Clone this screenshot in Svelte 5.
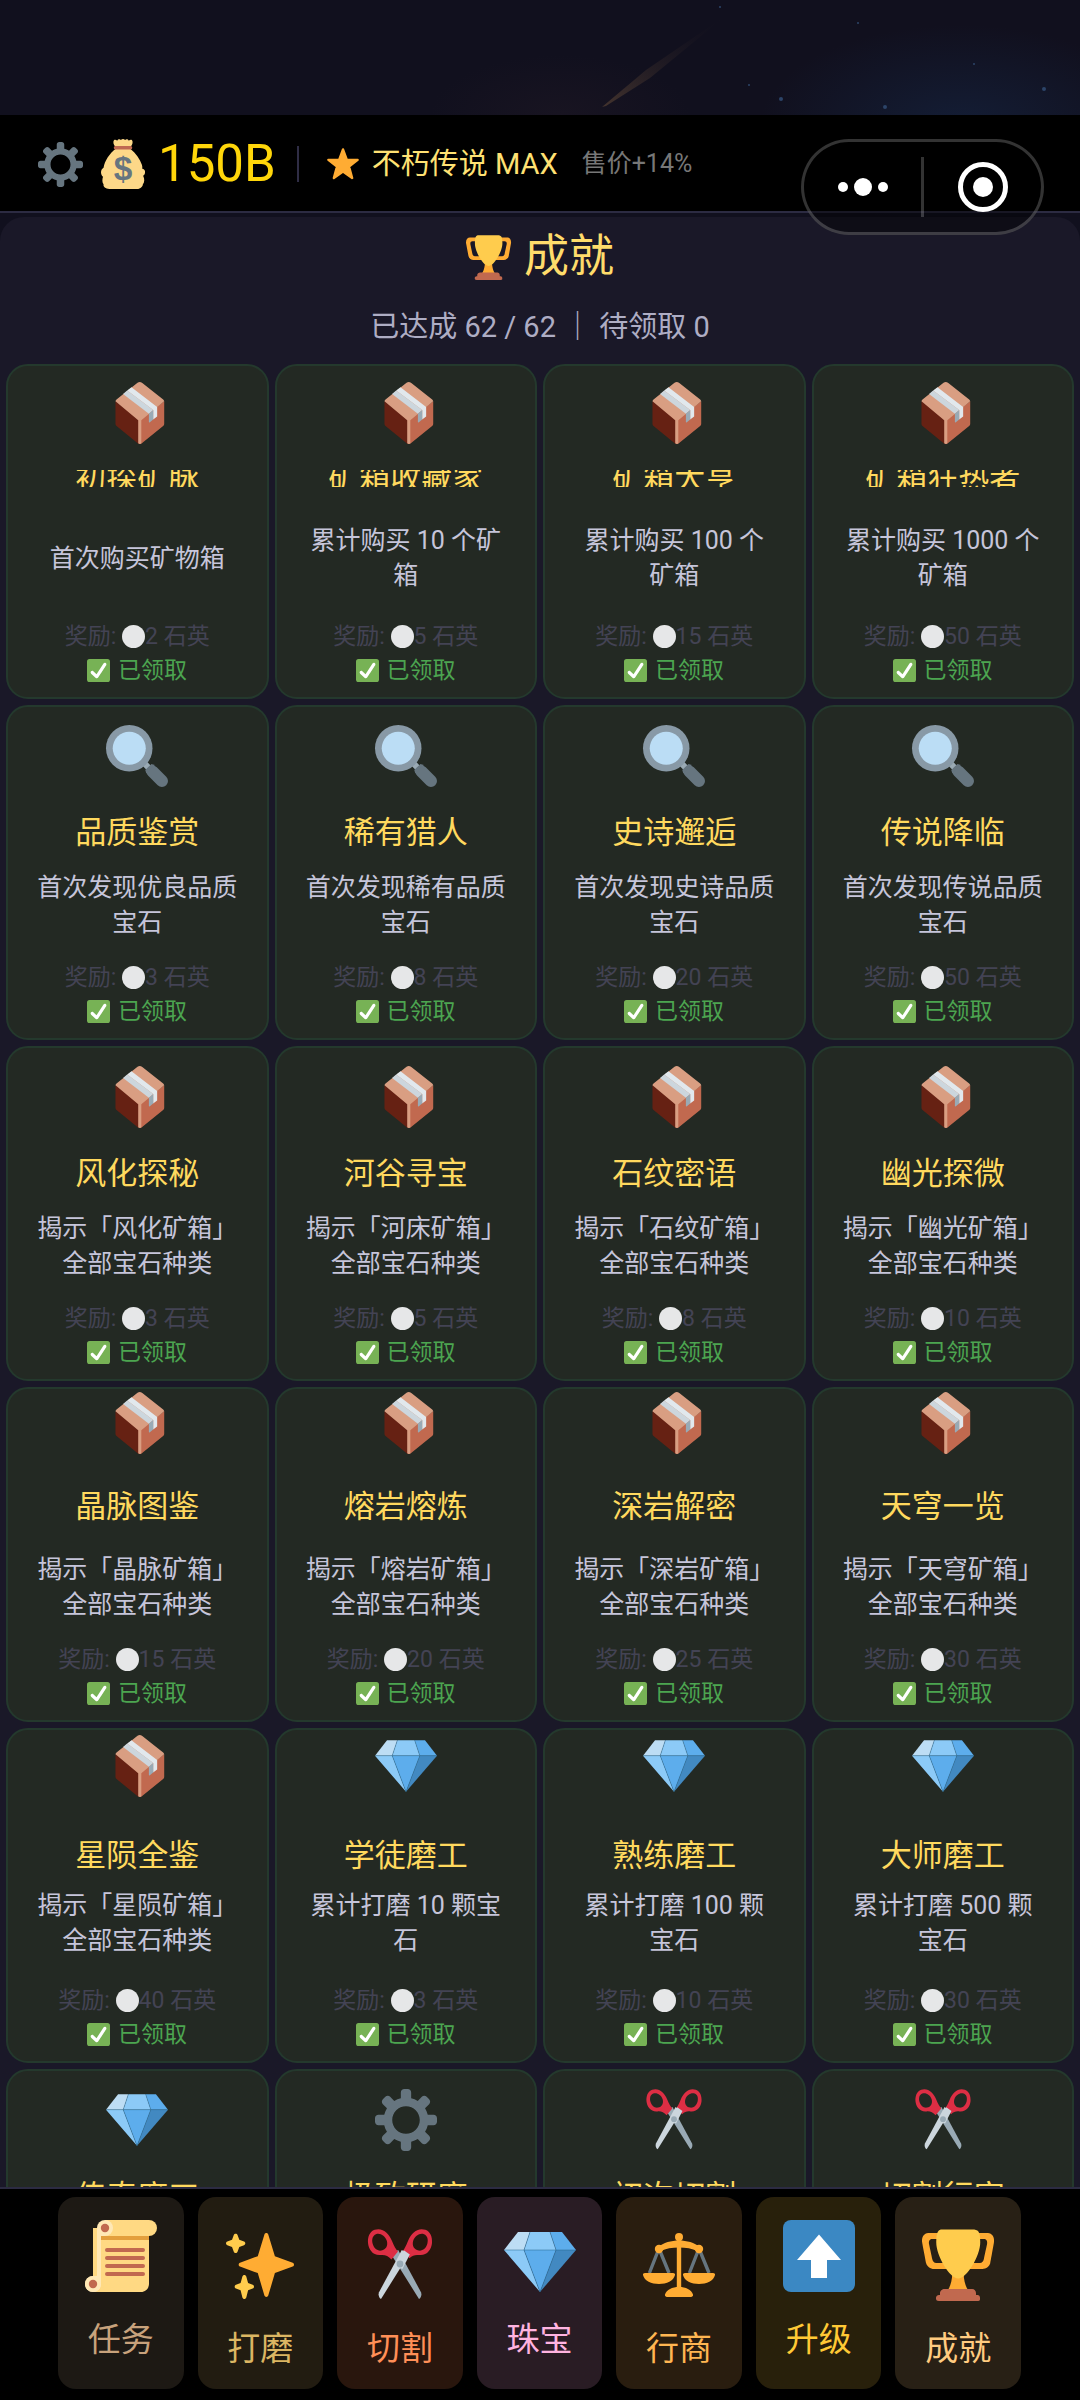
<script lang="ts">
	type Achievement = { icon: string; name: string; desc?: string; reward?: number };

	const rows: { layout: string; items: Achievement[] }[] = [
		{
			layout: 'clip',
			items: [
				{ icon: 'box', name: '初探矿脉', desc: '首次购买矿物箱', reward: 2 },
				{ icon: 'box', name: '矿箱收藏家', desc: '累计购买 10 个矿\n箱', reward: 5 },
				{ icon: 'box', name: '矿箱大亨', desc: '累计购买 100 个\n矿箱', reward: 15 },
				{ icon: 'box', name: '矿箱狂热者', desc: '累计购买 1000 个\n矿箱', reward: 50 }
			]
		},
		{
			layout: '',
			items: [
				{ icon: 'lens', name: '品质鉴赏', desc: '首次发现优良品质\n宝石', reward: 3 },
				{ icon: 'lens', name: '稀有猎人', desc: '首次发现稀有品质\n宝石', reward: 8 },
				{ icon: 'lens', name: '史诗邂逅', desc: '首次发现史诗品质\n宝石', reward: 20 },
				{ icon: 'lens', name: '传说降临', desc: '首次发现传说品质\n宝石', reward: 50 }
			]
		},
		{
			layout: '',
			items: [
				{ icon: 'box', name: '风化探秘', desc: '揭示「风化矿箱」\n全部宝石种类', reward: 3 },
				{ icon: 'box', name: '河谷寻宝', desc: '揭示「河床矿箱」\n全部宝石种类', reward: 5 },
				{ icon: 'box', name: '石纹密语', desc: '揭示「石纹矿箱」\n全部宝石种类', reward: 8 },
				{ icon: 'box', name: '幽光探微', desc: '揭示「幽光矿箱」\n全部宝石种类', reward: 10 }
			]
		},
		{
			layout: 'high',
			items: [
				{ icon: 'box', name: '晶脉图鉴', desc: '揭示「晶脉矿箱」\n全部宝石种类', reward: 15 },
				{ icon: 'box', name: '熔岩熔炼', desc: '揭示「熔岩矿箱」\n全部宝石种类', reward: 20 },
				{ icon: 'box', name: '深岩解密', desc: '揭示「深岩矿箱」\n全部宝石种类', reward: 25 },
				{ icon: 'box', name: '天穹一览', desc: '揭示「天穹矿箱」\n全部宝石种类', reward: 30 }
			]
		},
		{
			layout: 'tight',
			items: [
				{ icon: 'box', name: '星陨全鉴', desc: '揭示「星陨矿箱」\n全部宝石种类', reward: 40 },
				{ icon: 'gem', name: '学徒磨工', desc: '累计打磨 10 颗宝\n石', reward: 3 },
				{ icon: 'gem', name: '熟练磨工', desc: '累计打磨 100 颗\n宝石', reward: 10 },
				{ icon: 'gem', name: '大师磨工', desc: '累计打磨 500 颗\n宝石', reward: 30 }
			]
		},
		{
			layout: '',
			items: [
				{ icon: 'gem', name: '传奇磨工' },
				{ icon: 'gear', name: '极致研磨' },
				{ icon: 'scissors', name: '初次切割' },
				{ icon: 'scissors', name: '切割行家' }
			]
		}
	];

	const tabs = [
		{ id: 'task', icon: 'scroll', label: '任务', layout: '' },
		{ id: 'polish', icon: 'sparkles', label: '打磨', layout: 'low' },
		{ id: 'cut', icon: 'scissors', label: '切割', layout: 'low' },
		{ id: 'jewel', icon: 'gem', label: '珠宝', layout: 'drop' },
		{ id: 'trade', icon: 'scales', label: '行商', layout: 'low' },
		{ id: 'upgrade', icon: 'up', label: '升级', layout: '' },
		{ id: 'achieve', icon: 'trophy', label: '成就', layout: 'low' }
	];

	const total = 62;
	const done = 62;
	const pending = 0;

	let active = $state('achieve');
</script>

{#snippet icon(name: string)}
	<svg class="icon" viewBox="0 0 36 36" aria-hidden="true">
		{#if name === 'box'}
			<path fill="#662113" d="M5.5 11.2 19.6 22v14c-.4 0-.8-.2-1.200-.5L6.300 25.700c-.5-.4-.8-.9-.8-1.500z" />
			<path fill="#C1694F" d="M33.800 11.200 19.600 22v14c.4 0 .8-.2 1.200-.5l12.200-9.800c.5-.4.8-.9.8-1.500z" />
			<path fill="#D99E82" d="M5.500 11.200c0-.4.200-.8.600-1.100L18.300.5c.8-.6 1.800-.6 2.600 0l12.300 9.600c.4.300.6.700.6 1.100L20.500 22.200v13.400c-.6.500-1.200.5-1.800 0V22.200z" />
			<path fill="#E1E8ED" d="M14.800 3.100 29.700 14.500v5.600l-2.300 1.700v-5.500L12.300 5z" />
			<path fill="#CCD6DD" d="M12.300 5 27.400 16.300l-2.500 2.100L9.900 6.900z" />
			<path fill="#99AAB5" d="m27.400 16.300-2.500 2.100v4.700c0 .4.300.5.600.3l1.900-1.600z" />
		{:else if name === 'lens'}
			<path stroke="#9AAAB4" stroke-width="3.500" d="m22 22 4 4" />
			<path stroke="#66757F" stroke-width="7" stroke-linecap="round" d="m27 27 5.500 5.500" />
			<path fill="#66757F" d="m22.800 26.200 3.600-3.600 2 .6-5 5z" />
			<circle cx="13.500" cy="13.500" r="13.500" fill="#8899A6" />
			<circle cx="13.500" cy="13.500" r="9.600" fill="#BBDDF5" />
		{:else if name === 'gem'}
			<path fill="#BDDDF4" d="M13 3H7l-7 9h10z" />
			<path fill="#5DADEC" d="m36 12-7-9h-6l3 9z" />
			<path fill="#4289C1" d="M26 12h10L18 33z" />
			<path fill="#8CCAF7" d="M10 12H0l18 21zm3-9-3 9h16l-3-9z" />
			<path fill="#5DADEC" d="m18 33-8-21h16z" />
			<path fill="none" stroke="#27668f" stroke-width=".250" d="M13 3l-3 9 8 21 8-21-3-9M0 12h36" />
		{:else if name === 'gear'}
			<path fill="#66757F" d="M34 15h-3.362c-.324-1.369-.864-2.651-1.582-3.814l2.379-2.379c.781-.781.781-2.048 0-2.829l-1.414-1.414c-.781-.781-2.047-.781-2.828 0l-2.379 2.379C23.650 6.225 22.369 5.686 21 5.362V2c0-1.104-.896-2-2-2h-2c-1.104 0-2 .896-2 2v3.362c-1.369.324-2.651.864-3.814 1.582L8.808 4.565c-.781-.781-2.048-.781-2.828 0L4.565 5.979c-.781.781-.781 2.048-.001 2.829l2.379 2.379C6.225 12.350 5.686 13.632 5.362 15H2c-1.104 0-2 .896-2 2v2c0 1.104.896 2 2 2h3.362c.324 1.368.864 2.650 1.582 3.813l-2.379 2.379c-.78.78-.78 2.048.001 2.829l1.414 1.414c.78.78 2.047.78 2.828 0l2.379-2.379c1.163.719 2.445 1.258 3.814 1.582V34c0 1.104.896 2 2 2h2c1.104 0 2-.896 2-2v-3.362c1.368-.324 2.650-.864 3.813-1.582l2.379 2.379c.781.781 2.047.781 2.828 0l1.414-1.414c.781-.781.781-2.048 0-2.829l-2.379-2.379c.719-1.163 1.258-2.445 1.582-3.814H34c1.104 0 2-.896 2-2v-2C36 15.896 35.104 15 34 15zM18 26c-4.418 0-8-3.582-8-8s3.582-8 8-8 8 3.582 8 8-3.582 8-8 8z" />
		{:else if name === 'scissors'}
			<path fill="#99AAB5" d="m13.600 12.800 3.500-2.300L28.500 31.600c.4.900.2 2.800-1 3.400z" />
			<path fill="#CCD6DD" d="m22.400 12.800-3.500-2.300L7.500 31.600c-.4.900-.2 2.800 1 3.400z" />
			<path fill="#DD2E44" fill-rule="evenodd" d="M5.300.4C9.200-.9 12.500 2 14 6c1 2.600 2 4.300 3 5.300l-3.300 4c-1.600-2-3.300-2.500-5.300-2.300C4.500 13.400 2.300 10.300 2 7 1.800 4 2.800 1.300 5.300.4zM6 2.600c-1.700.6-2.200 2.600-1.700 4.700.6 2.400 2.400 3.800 4.400 3.500 2.300-.4 3.400-2.500 2.700-4.900C10.600 3.500 8.200 1.900 6 2.600z" />
			<path fill="#DD2E44" fill-rule="evenodd" d="M30.700.4C26.800-.9 23.500 2 22 6c-1 2.600-2 4.300-2.500 4.800l3.200 3.800c1.600-1.500 2.900-1.800 4.900-1.600 3.900.4 6.100-2.700 6.400-6 .2-3-.8-5.700-3.300-6.600zM30 2.600c1.700.6 2.200 2.600 1.700 4.700-.6 2.400-2.400 3.800-4.400 3.500-2.300-.4-3.400-2.500-2.700-4.900.8-2.400 3.200-4 5.400-3.300z" />
			<path fill="#CCD6DD" d="m19.900 10.600 3 2.200-3.700 7.200-3.600-1.700z" />
			<circle cx="18" cy="17.500" r="1.700" fill="#99AAB5" />
		{:else if name === 'trophy'}
			<path fill="#FFAC33" d="M5.123 5h6C12.227 5 13 4.896 13 6V4c0-1.104-.773-2-1.877-2h-8c-2 0-3.583 2.125-3 5 0 0 1.791 9.375 1.917 9.958C2.373 18.500 4.164 20 6.081 20h6.958c1.105 0-.039-1.896-.039-3v-2c0 1.104-.773 2-1.877 2h-4c-1.104 0-1.833-1.042-2-2S3.539 7.667 3.539 7.667C3.206 5.750 4.018 5 5.123 5zm25.812 0h-6C23.831 5 22 4.896 22 6V4c0-1.104 1.831-2 2.935-2h8c2 0 3.584 2.125 3 5 0 0-1.633 9.419-1.771 10-.354 1.500-2.042 3-4 3h-7.146C21.914 20 22 18.104 22 17v-2c0 1.104 1.831 2 2.935 2h4c1.104 0 1.834-1.042 2-2s1.584-7.333 1.584-7.333C32.851 5.750 32.040 5 30.935 5z" />
			<path fill="#FFAC33" d="M20.832 22c0-6.958-2.709 0-2.709 0s-3-6.958-3 0-3.291 10-3.291 10h12.292s-3.292-3.042-3.292-10z" />
			<path fill="#FFCC4D" d="M29.123 6.577c0 6.775-6.770 18.192-11 18.192-4.231 0-11-11.417-11-18.192 0-5.195 1-6.319 3-6.319 1.374 0 6.025-.027 8-.027h7c2.917 0 4 .684 4 6.346z" />
			<path fill="#C1694F" d="M27 33c0 1.104.227 2-.877 2h-16C9.018 35 9 34.104 9 33v-1c0-1.104 1.164-2 2.206-2h13.917c1.042 0 1.877.896 1.877 2z" />
			<path fill="#C1694F" d="M29 34.625c0 .76.165 1.375-1.252 1.375H8.498C7.206 36 7 35.385 7 34.625v-.25C7 33.615 7.738 33 8.498 33h19.250c.759 0 1.252.615 1.252 1.375z" />
		{:else if name === 'bag'}
			<path fill="#FDD888" d="M12.500 5.500C11 4 10.700 2 11.500.9c.8-.8 1.700-.1 2.300.3C14.500.1 15.700-.2 16.500.8c.9-1 2.100-1 3 0 .8-1 2-.7 2.700.4.6-.4 1.500-1.100 2.300-.3.8 1.100.5 3.100-1 4.600z" />
			<path fill="#FDD888" d="M12.800 7h10.400c4 3.200 7 7.300 8.400 11.600.3 1 .4 1.900.3 2.900 1.600.3 2.300 1.500 1.900 3.200-.2.900-.6 1.400-1.300 1.700 1.200 2.500 1 4.800-.2 6.100.1 1.300-1.500 3.500-4.200 3.500H8.200c-2.800 0-4.600-1.700-4.200-3.400-1.100-1.400-1-3.700-.4-5.500C2 26 1.300 22.300 4 20.700c.7-5 4.500-10.500 8.800-13.700z" />
			<path fill="#BF6952" d="M12.500 5h11c1.500 0 1.500 2.500 0 2.500h-11c-1.500 0-1.500-2.500 0-2.500z" />
			<text x="18" y="29.500" text-anchor="middle" class="coin">$</text>
		{:else if name === 'star'}
			<path fill="#FFAC33" stroke="#FFAC33" stroke-width="2.500" stroke-linejoin="round" d="m18 2.500 4 10.800 11.500.3-9.100 7 3.300 12.200-9.700-6.900-9.700 6.900 3.300-12.200-9.100-7 11.500-.3z" />
		{:else if name === 'scroll'}
			<path fill="#FFD983" d="M32 8v24c0 2.200-1.800 4-4 4H4V4h28z" />
			<path fill="#FFE8B6" d="M6 4h4v4H8v24a4 4 0 1 1-4-4h2z" />
			<path fill="#E39F3D" d="M8 8h24v2H8z" />
			<path fill="#FFD983" d="M10 0h22a4 4 0 0 1 0 8H10z" />
			<circle cx="10" cy="4" r="4" fill="#FFE8B6" />
			<circle cx="10" cy="4" r="2.100" fill="#C1694F" />
			<circle cx="4" cy="32" r="4" fill="#FFE8B6" />
			<circle cx="4" cy="32" r="2.100" fill="#C1694F" />
			<path stroke="#C1694F" stroke-width="2" stroke-linecap="round" d="M11 15h18M11 19h18M11 23h18M11 27h18" />
		{:else if name === 'sparkles'}
			<path fill="#FFAC33" d="m34.347 16.893-8.899-3.294-3.323-10.891c-.128-.42-.517-.708-.956-.708s-.828.288-.956.708l-3.322 10.891-8.900 3.294c-.393.146-.653.519-.653.938s.26.793.653.938l8.895 3.293 3.324 11.223c.126.424.516.715.959.715s.833-.291.959-.716l3.324-11.223 8.896-3.293c.391-.144.652-.518.652-.937s-.261-.792-.653-.938z" />
			<path fill="#FFCC4D" d="m14.347 27.894-2.314-.856-.9-3.300c-.118-.436-.513-.738-.964-.738s-.846.302-.965.737l-.9 3.300-2.313.856c-.393.146-.653.520-.653.938s.26.793.653.938l2.301.853.907 3.622c.112.444.511.756.97.756s.858-.312.97-.757l.907-3.622 2.301-.853c.393-.144.653-.519.653-.937s-.26-.793-.653-.937zM10.009 6.231l-2.364-.875-.876-2.365c-.145-.393-.519-.653-.938-.653s-.792.26-.938.653l-.875 2.365-2.365.875c-.393.146-.653.520-.653.938s.26.793.653.938l2.365.875.875 2.365c.146.393.52.653.938.653s.792-.26.938-.653l.875-2.365 2.365-.875c.393-.146.653-.52.653-.938s-.26-.792-.653-.938z" />
		{:else if name === 'scales'}
			<path fill="none" stroke="#66757F" stroke-width="1.700" d="M7.500 11 3.200 22M8.500 11l4.500 11M27.500 11l-4.300 11M28.500 11 33 22" />
			<circle cx="18" cy="4" r="2" fill="#FFAC33" />
			<path fill="#FFAC33" d="M16.900 5h2.200v25h-2.200z" />
			<path fill="#FFAC33" d="M7.500 9C13 4.700 23 4.700 28.500 9l-1.500 2c-4.500-2.300-13.500-2.300-18 0z" />
			<circle cx="8" cy="10" r="2.100" fill="#FFAC33" />
			<circle cx="28" cy="10" r="2.100" fill="#FFAC33" />
			<path fill="#FFAC33" d="M1 22h14c.8 0 1.100.5 1 1-.7 3-4.200 4.500-8 4.500S.7 26 0 23c-.1-.5.200-1 1-1zM21 22h14c.8 0 1.100.5 1 1-.7 3-4.200 4.500-8 4.500S20.700 26 20 23c-.1-.5.200-1 1-1zM12 34c-.8 0-1.200-.6-1-1.300C11.800 30.300 14.600 29 18 29s6.200 1.300 7 3.700c.2.700-.2 1.300-1 1.300z" />
		{:else if name === 'up'}
			<rect width="36" height="36" rx="4" fill="#3B88C3" />
			<path fill="#fff" d="M18 7.200 7 20h7v9h8v-9h7z" />
		{:else if name === 'check'}
			<rect width="36" height="36" rx="4" fill="#77B255" />
			<path fill="#fff" d="M29.280 6.362c-1.156-.751-2.704-.422-3.458.736L14.936 23.877l-5.029-4.650c-1.014-.938-2.596-.875-3.533.138-.937 1.014-.875 2.596.139 3.533l7.209 6.666c.48.445 1.090.665 1.696.665.673 0 1.534-.282 2.099-1.139.332-.506 12.500-19.270 12.500-19.270.751-1.159.421-2.707-.737-3.458z" />
		{:else if name === 'quartz'}
			<circle cx="18" cy="18" r="18" fill="#E6E7E8" />
		{/if}
	</svg>
{/snippet}

<div class="app">
	<svg class="sky" viewBox="0 0 1080 216" preserveAspectRatio="xMaxYMin slice" aria-hidden="true">
		<defs>
			<linearGradient id="trail" x1="0" y1="1" x2="1" y2="0">
				<stop offset="0" stop-color="#44342e" />
				<stop offset="1" stop-color="#11101e" stop-opacity="0" />
			</linearGradient>
			<radialGradient id="glow">
				<stop offset="0" stop-color="#15233f" stop-opacity=".7" />
				<stop offset="1" stop-color="#15233f" stop-opacity="0" />
			</radialGradient>
			<radialGradient id="dust">
				<stop offset="0" stop-color="#231a26" stop-opacity=".4" />
				<stop offset="1" stop-color="#231a26" stop-opacity="0" />
			</radialGradient>
		</defs>
		<ellipse cx="960" cy="125" rx="200" ry="100" fill="url(#glow)" />
		<ellipse cx="560" cy="115" rx="130" ry="60" fill="url(#dust)" />
		<path fill="url(#trail)" d="M602 107 646 70 728 14 650 78 606 106z" />
		<g fill="#2c4468">
			<circle cx="749" cy="85" r="1" />
			<circle cx="781" cy="99" r="2" />
			<circle cx="858" cy="23" r="1" />
			<circle cx="885" cy="107" r="2" />
			<circle cx="974" cy="64" r="1" />
			<circle cx="1044" cy="89" r="2" />
			<circle cx="720" cy="7" r="1" />
		</g>
	</svg>

	<header class="topbar">
		<button class="settings" aria-label="设置">{@render icon('gear')}</button>
		<span class="money">{@render icon('bag')}<span>150B</span></span>
		<span class="divider"></span>
		<span class="rank">{@render icon('star')}<span>不朽传说 MAX</span></span>
		<span class="bonus">售价+14%</span>
	</header>

	<div class="capsule">
		<button aria-label="更多">
			<svg width="50" height="50" viewBox="0 0 50 50" fill="#fff">
				<circle cx="5" cy="25" r="5" />
				<circle cx="25" cy="25" r="9" />
				<circle cx="45" cy="25" r="5" />
			</svg>
		</button>
		<span class="capsule-line"></span>
		<button aria-label="关闭">
			<svg width="50" height="50" viewBox="0 0 50 50" fill="#fff">
				<circle cx="25" cy="25" r="22.500" fill="none" stroke="#fff" stroke-width="5" />
				<circle cx="25" cy="25" r="10" />
			</svg>
		</button>
	</div>

	<main class="panel">
		<h1>{@render icon('trophy')}<span>成就</span></h1>
		<p class="summary">已达成 {done} / {total} ｜ 待领取 {pending}</p>

		<ul class="grid">
			{#each rows as row}
				{#each row.items as item}
					<li class="card {row.layout}">
						{@render icon(item.icon)}
						<h2>{item.name}</h2>
						{#if item.desc}
							<p class="desc">{item.desc}</p>
							<div class="foot">
								<p class="reward">奖励: {@render icon('quartz')}{item.reward} 石英</p>
								<p class="claimed">{@render icon('check')} 已领取</p>
							</div>
						{/if}
					</li>
				{/each}
			{/each}
		</ul>
	</main>

	<nav class="tabs">
		{#each tabs as tab}
			<button
				class="tab {tab.id} {tab.layout}"
				aria-current={active === tab.id ? 'page' : undefined}
				onclick={() => (active = tab.id)}
			>
				{@render icon(tab.icon)}
				<span>{tab.label}</span>
			</button>
		{/each}
	</nav>
</div>

<style>
	:global(body) {
		margin: 0;
		background: #000;
	}

	.app {
		position: relative;
		display: flex;
		flex-direction: column;
		height: 100vh;
		box-sizing: border-box;
		padding-top: 115px;
		background: #11101e;
		font-family: Roboto, 'Noto Sans CJK SC', sans-serif;
		overflow: hidden;
	}

	h1,
	h2,
	p,
	ul {
		margin: 0;
		padding: 0;
		font-weight: 400;
	}

	button {
		padding: 0;
		border: 0;
		background: none;
		font: inherit;
		cursor: pointer;
	}

	.icon {
		display: block;
		flex: none;
		overflow: visible;
	}

	.coin {
		font: 700 24px 'Liberation Sans', sans-serif;
		fill: #67757f;
	}

	.sky {
		position: absolute;
		top: 0;
		left: 0;
		width: 100%;
		height: 216px;
	}

	.topbar {
		position: relative;
		display: flex;
		align-items: center;
		height: 94px;
		padding: 2px 38px 0;
		background: #000;
		border-bottom: 2px solid #2c2b42;
		white-space: nowrap;
	}

	.settings .icon {
		width: 45px;
		height: 45px;
	}

	.money {
		display: flex;
		align-items: center;
		gap: 10px;
		margin-left: 15px;
		color: #ffd60a;
		font-size: 51px;
		line-height: 60px;
	}

	.money .icon {
		width: 50px;
		height: 50px;
	}

	.divider {
		width: 2px;
		height: 36px;
		margin: 0 27px 0 21px;
		background: #2f2d45;
	}

	.rank {
		display: flex;
		align-items: center;
		gap: 12px;
		color: #ffe173;
		font-size: 29px;
		line-height: 40px;
	}

	.rank .icon {
		width: 34px;
		height: 34px;
	}

	.bonus {
		margin-left: 24px;
		color: #777;
		font-size: 25px;
		line-height: 40px;
	}

	.capsule {
		position: absolute;
		top: 139px;
		right: 36px;
		z-index: 2;
		display: flex;
		align-items: center;
		width: 243px;
		height: 96px;
		box-sizing: border-box;
		border: 3px solid rgba(255, 255, 255, 0.2);
		border-radius: 48px;
		background: rgba(0, 0, 0, 0.45);
	}

	.capsule button {
		flex: 1;
		display: flex;
		justify-content: center;
	}

	.capsule-line {
		width: 3px;
		height: 60px;
		background: rgba(255, 255, 255, 0.2);
	}

	.panel {
		position: relative;
		flex: 1;
		min-height: 0;
		margin-top: 4px;
		padding: 10px 6px 0;
		border-radius: 24px 24px 0 0;
		background: #1a1828;
		overflow-y: auto;
		scrollbar-width: none;
		text-align: center;
	}

	h1 {
		display: flex;
		align-items: center;
		justify-content: center;
		gap: 13px;
		color: #ffdc6b;
		font-size: 45px;
		line-height: 60px;
	}

	h1 .icon {
		width: 45px;
		height: 45px;
	}

	.summary {
		margin: 20px 0 17px;
		color: #aeadc4;
		font-size: 29px;
		line-height: 40px;
	}

	.grid {
		display: grid;
		grid-template-columns: repeat(4, 1fr);
		gap: 6px;
		list-style: none;
	}

	.card {
		display: flex;
		flex-direction: column;
		align-items: center;
		min-height: 335px;
		box-sizing: border-box;
		padding: 18px 0 9px;
		border: 2px solid #24392d;
		border-radius: 22px;
		background: #232923;
	}

	.card > .icon {
		width: 62px;
		height: 62px;
	}

	h2 {
		margin: 26px 0 17px;
		color: #ffd95e;
		font-size: 31px;
		line-height: 40px;
	}

	.desc {
		display: flex;
		align-items: center;
		height: 70px;
		color: #c6c5da;
		font-size: 25px;
		line-height: 35px;
		white-space: pre-line;
	}

	.foot {
		margin-top: auto;
		font-size: 23px;
		line-height: 34px;
	}

	.foot .icon {
		display: inline-block;
		width: 23px;
		height: 23px;
		vertical-align: -4px;
	}

	.reward {
		color: #434354;
	}

	.claimed {
		color: #4ca550;
	}

	.claimed .icon {
		margin-right: 2px;
	}

	/* first row: only a strip of the name shows */
	.clip {
		padding-top: 16px;
	}

	.clip h2 {
		display: flex;
		align-items: center;
		height: 17px;
		margin-bottom: 36px;
		overflow: hidden;
	}

	.high {
		padding-top: 3px;
	}

	.high h2 {
		margin: 33px 0 25px;
	}

	.tight {
		padding-top: 5px;
	}

	.tight h2 {
		margin: 39px 0 12px;
	}

	.tabs {
		position: relative;
		display: flex;
		gap: 14px;
		padding: 8px 59px 11px 58px;
		border-top: 2px solid #2c2b42;
		background: #000;
	}

	.tab {
		flex: 1;
		display: flex;
		flex-direction: column;
		align-items: center;
		gap: 28px;
		height: 192px;
		box-sizing: border-box;
		padding-top: 23px;
		border-radius: 18px;
		font-size: 33px;
		line-height: 40px;
	}

	.tab .icon {
		width: 72px;
		height: 72px;
	}

	.low {
		padding-top: 32px;
	}

	.drop {
		gap: 22px;
		padding-top: 29px;
	}

	.task {
		background: #1d1914;
		color: #c8a27c;
	}

	.polish {
		background: #221c11;
		color: #dbb663;
	}

	.cut {
		background: #29160d;
		color: #ff8f57;
	}

	.jewel {
		background: #291c24;
		color: #ffb3e0;
	}

	.trade {
		background: #291d0f;
		color: #ffb652;
	}

	.upgrade {
		background: #28200b;
		color: #ffc935;
	}

	.achieve {
		background: #282015;
		color: #ffcb80;
	}
</style>
